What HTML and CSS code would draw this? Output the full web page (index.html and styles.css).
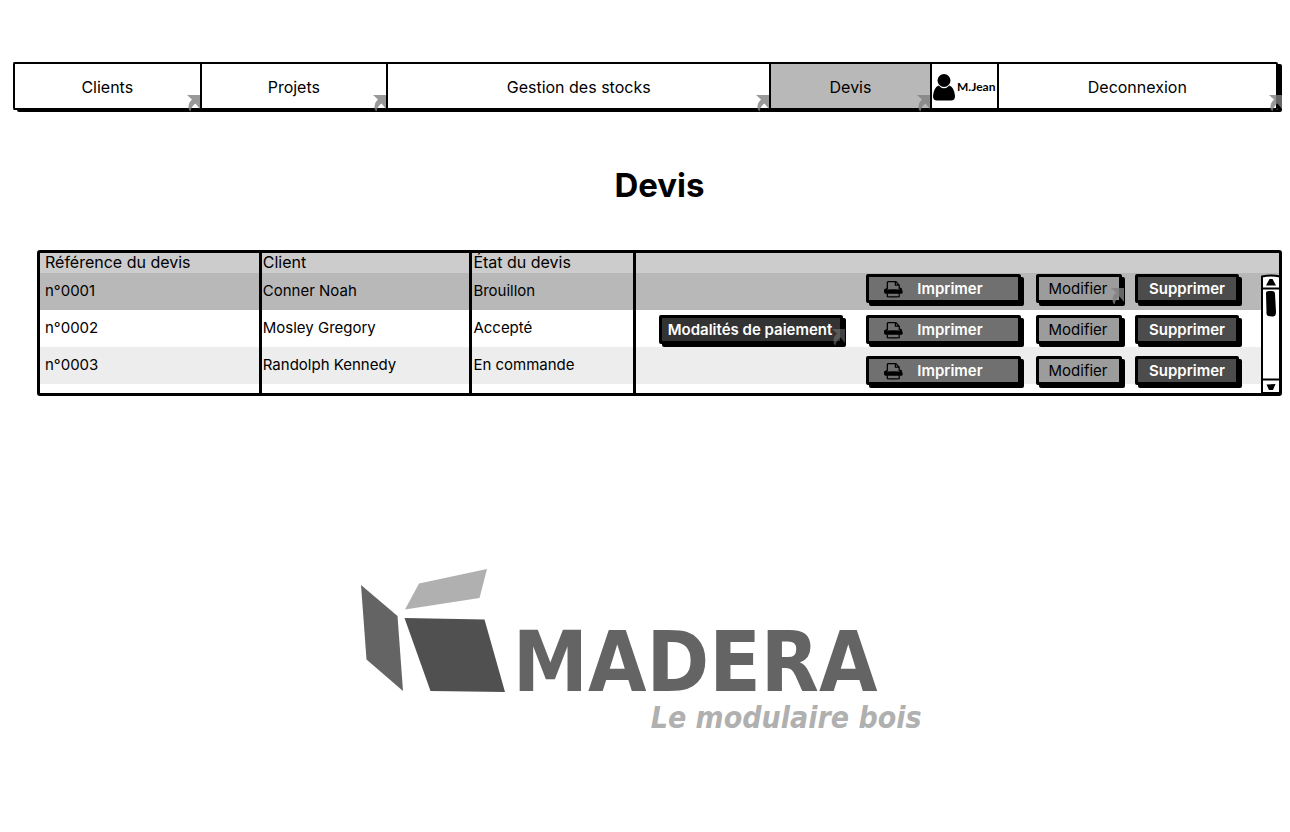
FILE: index.html
```html
<!DOCTYPE html>
<html lang="fr">
<head>
<meta charset="utf-8">
<meta name="viewport" content="width=device-width, initial-scale=1">
<title>Devis - Madera</title>
<link rel="stylesheet" href="styles.css">
</head>
<body>
<svg class="defs" aria-hidden="true">
  <symbol id="corner" viewBox="0 0 13 17"><path d="M0 0H13V14L8.500 8.500Q4.500 11 3.500 16.500L2 15Q0 9 5 4.500Z"/></symbol>
  <symbol id="printer" viewBox="0 0 20 18"><path fill="none" stroke="#000" stroke-width="1.300" d="M3.500 9V2Q4 1 5 1.200H12.500L16 5V9M12 1.500V5H16"/><path d="M3.500 9.500Q10 8.800 16.500 9.500V7.500L18.500 8 19.800 12.500 19 14H1L0 12.500V9.500L3 8Z"/><path fill="none" stroke="#000" stroke-width="1.300" d="M3.500 13.500V17Q10 17.500 16 17V13.500"/></symbol>
</svg>
<nav class="menu" aria-label="Menu principal">
  <a class="item" href="#clients">Clients<svg class="corner"><use href="#corner"/></svg></a>
  <a class="item" href="#projets">Projets<svg class="corner"><use href="#corner"/></svg></a>
  <a class="item" href="#stocks">Gestion des stocks<svg class="corner"><use href="#corner"/></svg></a>
  <a class="item active" href="#devis" aria-current="page">Devis<svg class="corner"><use href="#corner"/></svg></a>
  <div class="user">
    <svg class="avatar" viewBox="0 0 22 27" aria-hidden="true"><circle cx="11" cy="6.500" r="6.500"/><path d="M5.500 11.500Q11 17 16.500 11.500Q21.500 14 22 22Q22 26.500 18 26.500H4Q0 26.500 0 22Q.500 14 5.500 11.500Z"/></svg>
    <span>M.Jean</span>
  </div>
  <a class="item last" href="#deconnexion">Deconnexion<svg class="corner"><use href="#corner"/></svg></a>
</nav>
<main class="content">
  <h1 class="title">Devis</h1>
  <div class="panel">
    <table class="quotes">
      <colgroup><col class="c-ref"><col class="c-client"><col class="c-state"><col></colgroup>
      <thead><tr><th>Référence du devis</th><th>Client</th><th>État du devis</th><th></th></tr></thead>
      <tbody>
        <tr class="selected"><td>n°0001</td><td>Conner Noah</td><td>Brouillon</td><td></td></tr>
        <tr><td>n°0002</td><td>Mosley Gregory</td><td>Accepté</td><td></td></tr>
        <tr class="striped"><td>n°0003</td><td>Randolph Kennedy</td><td>En commande</td><td></td></tr>
        <tr class="spare"><td></td><td></td><td></td><td></td></tr>
      </tbody>
    </table>
    <div class="actions">
      <div class="row">
        <button class="btn print"><svg class="printer"><use href="#printer"/></svg>Imprimer</button>
        <button class="btn edit">Modifier<svg class="corner"><use href="#corner"/></svg></button>
        <button class="btn delete">Supprimer</button>
      </div>
      <div class="row">
        <button class="btn payment">Modalités de paiement<svg class="corner"><use href="#corner"/></svg></button>
        <button class="btn print"><svg class="printer"><use href="#printer"/></svg>Imprimer</button>
        <button class="btn edit">Modifier</button>
        <button class="btn delete">Supprimer</button>
      </div>
      <div class="row">
        <button class="btn print"><svg class="printer"><use href="#printer"/></svg>Imprimer</button>
        <button class="btn edit">Modifier</button>
        <button class="btn delete">Supprimer</button>
      </div>
    </div>
    <svg class="scrollbar" viewBox="0 0 20 120" aria-hidden="true">
      <path fill="#fff" stroke="#000" stroke-width="2" d="M1 2.500Q10 .500 19 2.500V119H1Z"/>
      <path stroke="#000" stroke-width="2" d="M1 14.500H19M1 105.500H19"/>
      <path d="M5 11.500 8.500 5H11.500L15 11.500ZM5.500 110.500 14.500 110 12 116H8Z"/>
      <path d="M5 20Q4.500 17 8 17H11Q14 17 14 20L15 38Q15 43 11 42.500L7 42Q5 41 5.500 38Z"/>
    </svg>
  </div>
  <div class="logo">
    <svg class="mark" viewBox="0 0 144 123" aria-hidden="true">
      <path fill="#646464" d="M0 16 36.500 47 42 122 5.500 90.500Z"/>
      <path fill="#b0b0b0" d="M58 14.500 126 0 118.500 29 44 40.500Z"/>
      <path fill="#505050" d="M43.500 49 123.500 50.500 144 123 69.500 122Z"/>
    </svg>
    <div class="wordmark">
      <p class="brand">MADERA</p>
      <p class="tagline">Le modulaire bois</p>
    </div>
  </div>
</main>
</body>
</html>
```
FILE: styles.css
```css
* { box-sizing: border-box; }
body {
  margin: 0;
  padding: 62px 8px 0 13px;
  background: #fff;
  color: #000;
  font: 15px/20px Inter, sans-serif;
}
p { margin: 0; }
.defs { position: absolute; width: 0; height: 0; }

.menu {
  display: grid;
  grid-template-columns: 187fr 187fr 384fr 161fr 67fr 280fr;
  height: 48px;
  margin-right: 4px;
  border: 2px solid #000;
  border-right: 0;
  border-radius: 2px;
  box-shadow: 4px 2px #000;
  font-size: 16px;
}
.item, .user {
  position: relative;
  display: flex;
  align-items: center;
  justify-content: center;
  padding-top: 2px;
  border-right: 2px solid #000;
  background: #fff;
  color: #000;
  text-decoration: none;
}
.item.active { background: #b8b8b8; }
.corner {
  position: absolute;
  right: 0;
  bottom: -4px;
  width: 13px;
  height: 17px;
  fill: #808080;
  opacity: .8;
}
.last .corner { right: -6px; }
.user {
  gap: 2px;
  font: bold 12px/16px Lato, sans-serif;
}
.avatar { flex: none; width: 22px; height: 27px; }

.content { padding-left: 24px; }
.title {
  margin: 54px 0 44px;
  text-align: center;
  font-size: 33px;
  line-height: 42px;
}

.panel {
  position: relative;
  border: 3px solid #000;
  border-radius: 3px;
}
.quotes {
  width: 100%;
  table-layout: fixed;
  border-collapse: separate;
  border-spacing: 0;
}
.c-ref { width: 17.9%; }
.c-client { width: 17%; }
.c-state { width: 13.2%; }
.quotes th, .quotes td {
  padding: 0 1px 2px;
  border-right: 3px solid #000;
  text-align: left;
  font-weight: 400;
  white-space: nowrap;
}
.quotes th { height: 20px; font-size: 16px; line-height: 18px; background: #ccc; }
.quotes td { height: 37px; }
.quotes th:first-child, .quotes td:first-child { padding-left: 5px; }
.quotes th:last-child, .quotes td:last-child { border-right: 0; }
.selected td { background: #b8b8b8; }
.striped td { background: #ededed; }
.quotes .spare td { height: 9px; }

.actions {
  position: absolute;
  top: 21px;
  right: 40px;
  display: grid;
  gap: 12px;
}
.row { display: flex; justify-content: flex-end; gap: 15px; }
.btn {
  position: relative;
  display: flex;
  align-items: center;
  justify-content: center;
  height: 29px;
  padding: 1px 0 0;
  border: 3px solid #000;
  border-radius: 2px;
  box-shadow: 3px 3px #000;
  color: #fff;
  font: 600 15px/20px Inter, sans-serif;
  white-space: nowrap;
}
.btn .corner { right: -5px; bottom: -5px; }
.print { width: 155px; gap: 14px; padding-right: 20px; background: #707070; }
.edit { width: 86px; padding-right: 2px; background: #9c9c9c; color: #000; font-weight: 400; }
.delete { width: 104px; margin-left: -2px; background: #4c4c4c; }
.payment { width: 184px; margin-right: 8px; padding-right: 2px; background: #333; }
.payment .corner { opacity: .5; }
.printer { width: 19px; height: 18px; }
.scrollbar {
  position: absolute;
  right: -2px;
  bottom: -1px;
  width: 20px;
  height: 120px;
}

.logo {
  display: flex;
  gap: 8px;
  margin: 173px 0 0 26%;
}
.mark { flex: none; width: 144px; height: 123px; }
.wordmark {
  padding-top: 51px;
  font-family: "DejaVu Sans Condensed", "DejaVu Sans", sans-serif;
  font-weight: 700;
  white-space: nowrap;
}
.brand { color: #646464; font-size: 84px; line-height: 84px; }
.tagline {
  padding-left: 138px;
  color: #b0b0b0;
  font-size: 30px;
  font-style: italic;
  line-height: 28px;
}
```
